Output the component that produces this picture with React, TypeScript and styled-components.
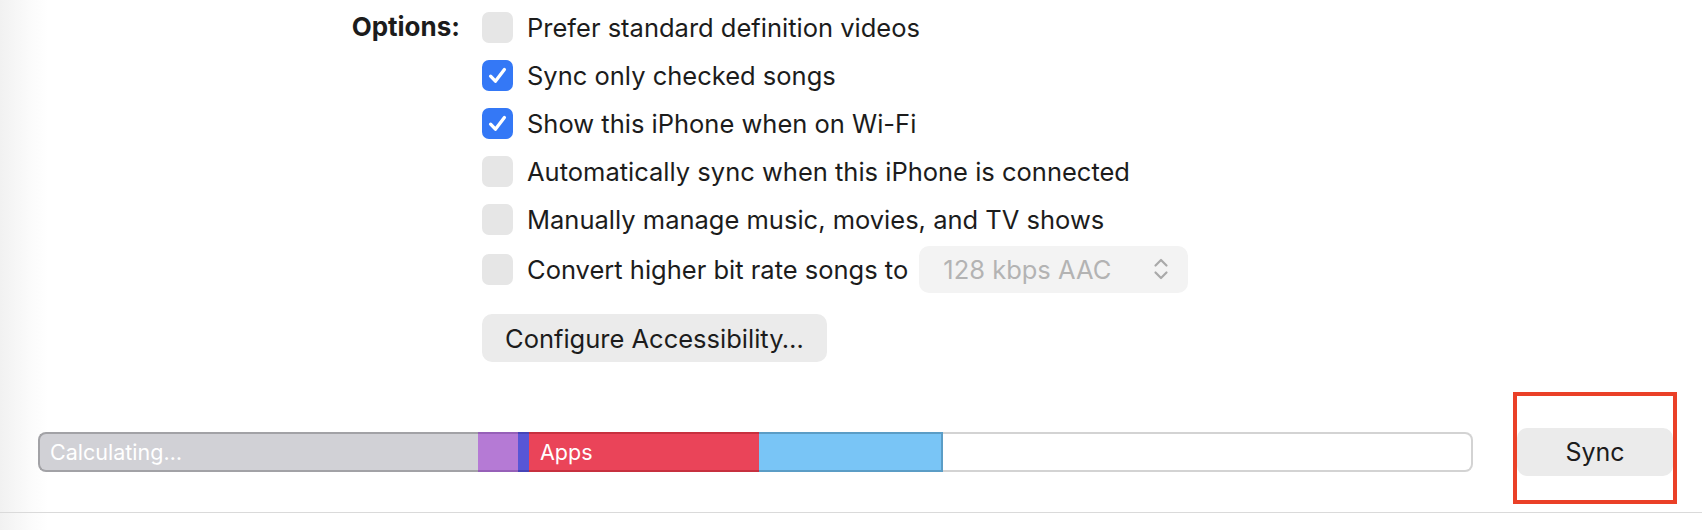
import React from "react";
import styled, { createGlobalStyle } from "styled-components";

const Global = createGlobalStyle`
  html, body {
    margin: 0;
    padding: 0;
    background: linear-gradient(to right, #f1f1f1 0px, #fbfbfb 30px, #ffffff 48px);
    font-family: Inter, "Noto Sans", "Liberation Sans", sans-serif;
    color: #1c1c1c;
    width: 1702px;
    height: 530px;
    overflow: hidden;
  }
`;

const Page = styled.main`
  display: flex;
  flex-direction: column;
`;

const OptionsGrid = styled.section`
  display: grid;
  grid-template-columns: 460px auto;
  column-gap: 22px;
  padding-top: 3px;
  align-items: start;
`;

const Label = styled.div`
  text-align: right;
  font-weight: 700;
  font-size: 26px;
  line-height: 48px;
  height: 48px;
`;

const List = styled.div`
  display: flex;
  flex-direction: column;
  align-items: flex-start;
`;

const Row = styled.label<{ $tall?: boolean }>`
  display: flex;
  align-items: center;
  gap: 14px;
  height: 48px;
  margin-top: ${(p) => (p.$tall ? "2px" : "0")};
  font-size: 25.5px;
  white-space: nowrap;
`;

const Box = styled.span<{ $checked?: boolean }>`
  width: 31px;
  height: 31px;
  border-radius: 7px;
  background: ${(p) => (p.$checked ? "#3478f6" : "#e6e6e6")};
  display: inline-flex;
  align-items: center;
  justify-content: center;
  flex: none;
`;

const Popup = styled.div`
  display: inline-flex;
  align-items: center;
  justify-content: space-between;
  box-sizing: border-box;
  width: 269px;
  height: 47px;
  margin-left: -3px;
  padding: 0 19px 0 24px;
  background: #f3f3f3;
  border-radius: 10px;
  color: #b3b3b3;
  font-size: 25.5px;
`;

const PushButton = styled.button`
  box-sizing: border-box;
  height: 48px;
  border: none;
  border-radius: 10px;
  background: #ebebeb;
  color: #1c1c1c;
  font-family: inherit;
  font-size: 25.5px;
  padding: 0 23px;
  cursor: default;
`;

const ConfigureButton = styled(PushButton)`
  margin-top: 21px;
`;

const SyncButton = styled(PushButton)`
  width: 156px;
  padding: 0;
  font-size: 25px;
`;

const Footer = styled.footer`
  display: flex;
  align-items: center;
  margin-top: 66px;
  padding-left: 38px;
  height: 48px;
`;

const Bar = styled.div`
  display: flex;
  width: 1435px;
  height: 40px;
  flex: none;
`;

const Segment = styled.div<{
  $bg: string;
  $edge: string;
  $first?: boolean;
  $last?: boolean;
  $right?: boolean;
}>`
  box-sizing: border-box;
  height: 100%;
  background: ${(p) => p.$bg};
  border-top: 2px solid ${(p) => p.$edge};
  border-bottom: 2px solid ${(p) => p.$edge};
  border-left: ${(p) => (p.$first ? `2px solid ${p.$edge}` : "none")};
  border-right: ${(p) => (p.$last || p.$right ? `2px solid ${p.$edge}` : "none")};
  border-radius: ${(p) => (p.$first ? "8px 0 0 8px" : p.$last ? "0 8px 8px 0" : "0")};
  flex: ${(p) => (p.$last ? "1" : "none")};
  color: #ffffff;
  font-size: 21.5px;
  line-height: 36px;
  padding-left: ${(p) => (p.$first ? "10px" : "11px")};
  white-space: nowrap;
  overflow: hidden;
`;

const SyncWrap = styled.div`
  position: relative;
  margin-left: 44px;
  display: flex;
`;

const Annotation = styled.div`
  position: absolute;
  left: -4px;
  top: -36px;
  width: 164px;
  height: 112px;
  box-sizing: border-box;
  border: 4px solid #ea4027;
  pointer-events: none;
`;

const Divider = styled.hr`
  margin: 36px 0 0;
  border: none;
  height: 1px;
  background: #dadada;
`;

const Check = () => (
  <svg width="31" height="31" viewBox="0 0 31 31">
    <path
      d="M8.6 16.2 L13.4 21.2 L22.4 9.6"
      fill="none"
      stroke="#ffffff"
      strokeWidth="3.3"
      strokeLinecap="round"
      strokeLinejoin="round"
    />
  </svg>
);

const Chevrons = () => (
  <svg width="16" height="24" viewBox="0 0 16 24">
    <path
      d="M2.5 8.5 L8 3 L13.5 8.5 M2.5 15.5 L8 21 L13.5 15.5"
      fill="none"
      stroke="#a9a9a9"
      strokeWidth="2.2"
      strokeLinecap="round"
      strokeLinejoin="round"
    />
  </svg>
);

type Opt = { text: string; checked: boolean };

const options: Opt[] = [
  { text: "Prefer standard definition videos", checked: false },
  { text: "Sync only checked songs", checked: true },
  { text: "Show this iPhone when on Wi-Fi", checked: true },
  { text: "Automatically sync when this iPhone is connected", checked: false },
  { text: "Manually manage music, movies, and TV shows", checked: false },
];

const segments = [
  { bg: "#d1d1d6", edge: "#a2a2a6", w: 440, label: "Calculating…" },
  { bg: "#b57ad5", edge: "#9660b8", w: 40, label: "" },
  { bg: "#5856d6", edge: "#4644b8", w: 10, label: "" },
  { bg: "#ea4459", edge: "#c7303f", w: 230, label: "Apps" },
  { bg: "#79c5f6", edge: "#5b9dc6", w: 184, label: "", right: true },
];

export default function App() {
  return (
    <Page>
      <Global />
      <OptionsGrid>
        <Label>Options:</Label>
        <List>
          {options.map((o) => (
            <Row key={o.text}>
              <Box $checked={o.checked}>{o.checked && <Check />}</Box>
              <span>{o.text}</span>
            </Row>
          ))}
          <Row $tall>
            <Box />
            <span>Convert higher bit rate songs to</span>
            <Popup>
              <span>128 kbps AAC</span>
              <Chevrons />
            </Popup>
          </Row>
          <ConfigureButton>Configure Accessibility…</ConfigureButton>
        </List>
      </OptionsGrid>
      <Footer>
        <Bar>
          {segments.map((s, i) => (
            <Segment
              key={i}
              $bg={s.bg}
              $edge={s.edge}
              $first={i === 0}
              $right={s.right}
              style={{ width: s.w }}
            >
              {s.label}
            </Segment>
          ))}
          <Segment $bg="#ffffff" $edge="#d3d3d3" $last />
        </Bar>
        <SyncWrap>
          <SyncButton>Sync</SyncButton>
          <Annotation />
        </SyncWrap>
      </Footer>
      <Divider />
    </Page>
  );
}
